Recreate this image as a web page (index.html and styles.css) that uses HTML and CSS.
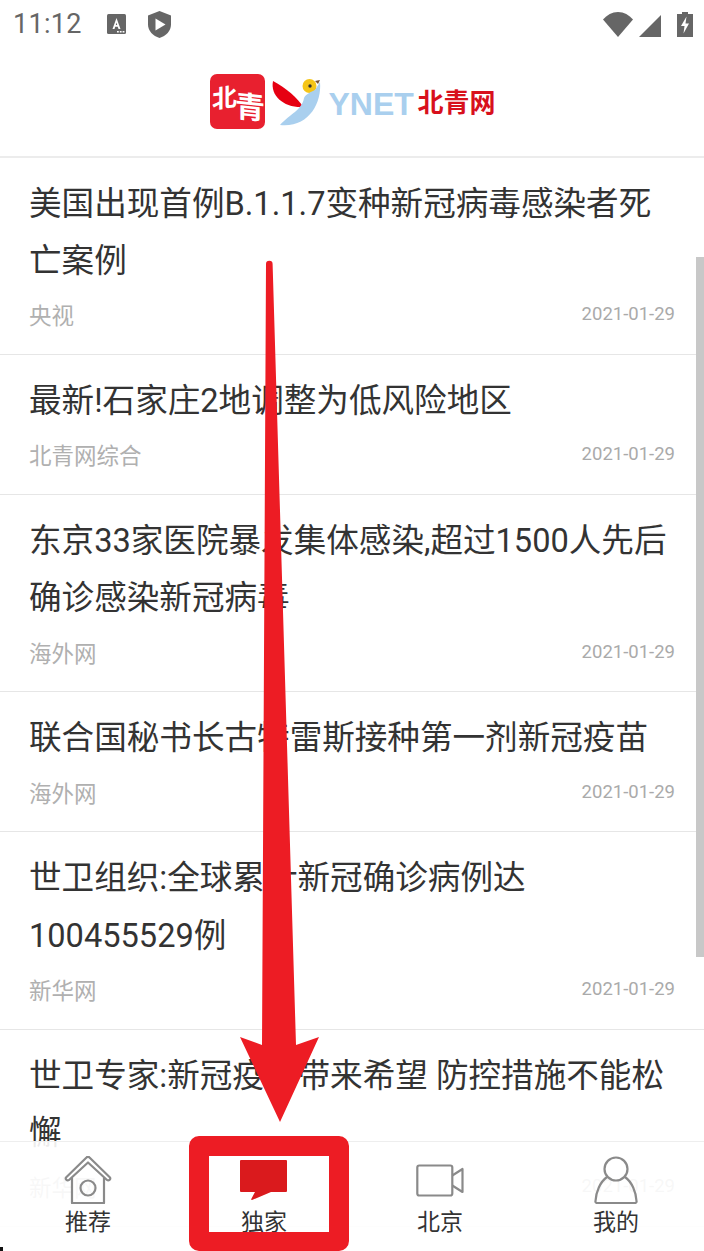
FILE: index.html
```html
<!DOCTYPE html>
<html lang="zh">
<head>
<meta charset="utf-8">
<title>北青网</title>
<link rel="stylesheet" href="styles.css">
</head>
<body>
<div class="screen">
  <div class="status">
    <div class="status-left">
      <span class="clock">11:12</span>
      <svg class="ic-a" viewBox="0 0 20 20"><rect width="19" height="20" rx="1.5" fill="#666"/><path d="M9.500 4l4 11h-2l-.7-2.200H8.200L7.500 15h-2zM8.800 10.900h1.400L9.500 8.600z" fill="#fff"/><path d="M10 17h1.800v1.600H10zM12.800 17h1.800v1.600h-1.800zM15.600 17h1.800v1.600h-1.800z" fill="#fff"/></svg>
      <svg class="ic-shield" viewBox="0 0 23 27"><path d="M11.500 0L23 4.500v9c0 6.500-5 11.500-11.500 13.500C5 25 0 20 0 13.500v-9z" fill="#666"/><path d="M7.500 7.500l10 6-10 6z" fill="#fff"/></svg>
    </div>
    <div class="status-right">
      <svg class="ic-wifi" viewBox="0 0 30 25"><path d="M15 25L0 7.500C4 3 9 0 15 0s11 3 15 7.500z" fill="#666"/></svg>
      <svg class="ic-signal" viewBox="0 0 22 22"><path d="M0 22L22 0v22z" fill="#666"/></svg>
      <svg class="ic-batt" viewBox="0 0 16 25"><path d="M5 0h6v2h5v23H0V2h5z" fill="#666"/><path d="M9.500 4.500L4 14h3.500l-1 7.500L12 11.500H8.500z" fill="#fff"/></svg>
    </div>
  </div>

  <header class="brand">
    <div class="logo">
      <div class="logo-badge"><span class="badge-a">北</span><span class="badge-b">青</span></div>
      <svg class="logo-bird" viewBox="0 0 60 56">
        <path d="M5 5C2 20 16 32 35 31 30 22 18 12 5 5z" fill="#e60012"/>
        <circle cx="41.500" cy="10" r="7" fill="#f5c518"/>
        <path d="M12 49C22 38 34 34 36 22 38 18 43 16 47 14L52 6C54 28 40 52 12 49z" fill="#a9cfee"/>
        <circle cx="42" cy="10" r="1.700" fill="#333"/>
        <path d="M47 5l5-1-2 4z" fill="#7a5230"/>
      </svg>
      <span class="logo-latin">YNET</span>
      <span class="logo-cn">北青网</span>
    </div>
  </header>

  <main class="news">
    <article class="item">
      <h2 class="title">美国出现首例B.1.1.7变种新冠病毒感染者死亡案例</h2>
      <div class="meta"><span class="source">央视</span><time class="date">2021-01-29</time></div>
    </article>
    <article class="item">
      <h2 class="title">最新!石家庄2地调整为低风险地区</h2>
      <div class="meta"><span class="source">北青网综合</span><time class="date">2021-01-29</time></div>
    </article>
    <article class="item">
      <h2 class="title">东京33家医院暴发集体感染,超过1500人先后确诊感染新冠病毒</h2>
      <div class="meta"><span class="source">海外网</span><time class="date">2021-01-29</time></div>
    </article>
    <article class="item">
      <h2 class="title">联合国秘书长古特雷斯接种第一剂新冠疫苗</h2>
      <div class="meta"><span class="source">海外网</span><time class="date">2021-01-29</time></div>
    </article>
    <article class="item">
      <h2 class="title">世卫组织:全球累计新冠确诊病例达100455529例</h2>
      <div class="meta"><span class="source">新华网</span><time class="date">2021-01-29</time></div>
    </article>
    <article class="item">
      <h2 class="title">世卫专家:新冠疫情带来希望 防控措施不能松懈</h2>
      <div class="meta"><span class="source">新华网</span><time class="date">2021-01-29</time></div>
    </article>
  </main>

  <div class="scrollbar"></div>

  <nav class="tabs">
    <div class="tab">
      <svg class="tab-icon" viewBox="0 0 48 48"><g fill="none" stroke="#8a8a8a" stroke-width="2.200" stroke-linejoin="round" stroke-linecap="round"><path d="M8 22V47H40V22"/><path d="M2 21.500a2 2 0 0 0 3 2.500L24 6.500 43 24a2 2 0 0 0 3-2.500L25.500 1.500a2 2 0 0 0-3 0z"/><circle cx="24" cy="32" r="7.500"/></g></svg>
      <span class="tab-label">推荐</span>
    </div>
    <div class="tab">
      <svg class="tab-icon" viewBox="0 0 48 48"><path d="M0 5a1 1 0 0 1 1-1h45a1 1 0 0 1 1 1v30a1 1 0 0 1-1 1H31L12 44l-1-.5L15 36H1a1 1 0 0 1-1-1z" fill="#da1a1d"/></svg>
      <span class="tab-label">独家</span>
    </div>
    <div class="tab">
      <svg class="tab-icon" viewBox="0 0 48 48"><g fill="none" stroke="#8a8a8a" stroke-width="2.200" stroke-linejoin="round"><rect x="1.300" y="9.500" width="35" height="30" rx="2"/><path d="M36.300 19.500L46.500 13V36L36.300 29.500"/></g></svg>
      <span class="tab-label">北京</span>
    </div>
    <div class="tab">
      <svg class="tab-icon" viewBox="0 0 48 48"><g fill="none" stroke="#8a8a8a" stroke-width="2.200" stroke-linejoin="round"><circle cx="24" cy="13" r="11.500"/><path d="M15 21C8 26 4 36 3.500 45a1.500 1.500 0 0 0 1.500 2h38a1.500 1.500 0 0 0 1.500-2C44 36 40 26 33 21"/></g></svg>
      <span class="tab-label">我的</span>
    </div>
  </nav>

  <div class="highlight"></div>
  <svg class="arrow" viewBox="0 0 704 1251"><path d="M266 264a3.300 3.300 0 0 1 6.600 0L296 1045 319 1037 280 1122 240 1037 262 1045z" fill="#ed1c24"/></svg>
  <div class="corner-mark"></div>
</div>
</body>
</html>
```
FILE: styles.css
```css
* { box-sizing: border-box; }
html, body { margin: 0; padding: 0; background: #fff; }
body { font-family: Roboto, "Noto Sans CJK SC", sans-serif; }
.screen { position: relative; width: 704px; height: 1251px; overflow: hidden; background: #fff; }

.status { display: flex; justify-content: space-between; align-items: center; height: 48px; padding: 0 11px 0 13px; }
.status-left, .status-right { display: flex; align-items: center; }
.clock { font-size: 27px; color: #666; width: 94px; letter-spacing: .3px; }
.ic-a { width: 20px; height: 20px; margin-right: 21px; }
.ic-shield { width: 23px; height: 27px; }
.ic-wifi { width: 30px; height: 25px; margin-right: 6px; }
.ic-signal { width: 22px; height: 22px; margin: 3px 16px 0 0; }
.ic-batt { width: 16px; height: 25px; }

.brand { height: 110px; border-bottom: 2px solid #ececec; display: flex; justify-content: center; padding-top: 26px; }
.logo { display: flex; align-items: flex-start; width: 285px; }
.logo-badge { position: relative; flex: none; width: 55px; height: 55px; border-radius: 7px; background: #e8202f; color: #fff; font-weight: 700; overflow: hidden; }
.badge-a, .badge-b { position: absolute; line-height: 1; }
.badge-a { left: 2px; top: 12px; font-size: 25px; transform: skewY(-8deg); }
.badge-b { left: 25px; top: 19px; font-size: 30px; transform: skewY(6deg); }
.logo-bird { flex: none; width: 60px; height: 56px; margin: 2px 0 0 3px; }
.logo-latin { flex: none; width: 85px; margin: 11px 0 0 1px; font-size: 32px; line-height: 38px; font-weight: 700; color: #a9cfee; font-family: "Liberation Sans", sans-serif; }
.logo-cn { flex: none; margin: 12px 0 0 4px; font-size: 26px; line-height: 34px; font-weight: 700; color: #d8101c; white-space: nowrap; }

.item { padding: 18px 29px 22.800px; border-bottom: 1px solid #e6e6e6; }
.title { margin: 0; font-size: 32.600px; line-height: 57.200px; font-weight: 400; color: #333; }
.meta { display: flex; justify-content: space-between; align-items: center; margin-top: 11px; height: 30px; }
.source { font-size: 22.500px; color: #b0b0b0; margin-bottom: 4px; }
.date { font-size: 18.500px; color: #aaa; margin-bottom: 4px; }

.scrollbar { position: absolute; right: 0; top: 257px; width: 8px; height: 700px; background: #c8c8c8; }

.tabs { position: absolute; left: 0; right: 0; bottom: 0; height: 110px; display: grid; grid-template-columns: repeat(4, 1fr); background: rgba(255,255,255,.9); border-top: 1px solid #eee; }
.tab { display: flex; flex-direction: column; align-items: center; padding-top: 14px; }
.tab-icon { width: 48px; height: 48px; display: block; }
.tab-label { font-size: 23px; line-height: 32px; color: #333; margin-top: 3px; }

.highlight { position: absolute; left: 189px; top: 1136px; width: 160px; height: 115px; border: 20px solid #ed1c24; border-bottom-width: 19px; border-radius: 10px; }
.arrow { position: absolute; left: 0; top: 0; width: 704px; height: 1251px; pointer-events: none; }
.corner-mark { position: absolute; left: 0; bottom: 0; width: 3px; height: 4px; background: #111; }
```
